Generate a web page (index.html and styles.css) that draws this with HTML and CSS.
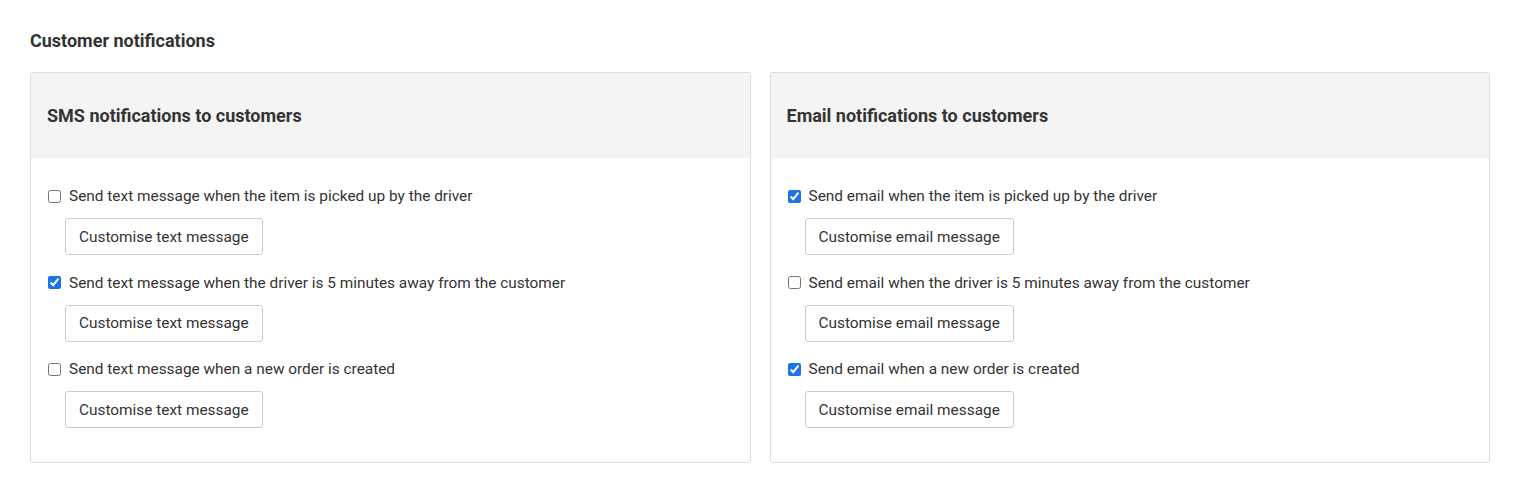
FILE: index.html
```
<!DOCTYPE html>
<html>

<head>
    <title>Customer notifications</title>
    <link rel="stylesheet" href="styles.css">
</head>

<body>
    <div class="settings">
        <h2 class="settings-title">Customer notifications</h2>
        <div class="panels">
            <div class="panel">
                <div class="panel-head">SMS notifications to customers</div>
                <div class="panel-body">
                    <div class="option">
                        <label><input type="checkbox"> Send text message when the item is picked up by the driver</label>
                        <button class="btn">Customise text message</button>
                    </div>
                    <div class="option">
                        <label><input type="checkbox" checked> Send text message when the driver is 5 minutes away from the customer</label>
                        <button class="btn">Customise text message</button>
                    </div>
                    <div class="option">
                        <label><input type="checkbox"> Send text message when a new order is created</label>
                        <button class="btn">Customise text message</button>
                    </div>
                </div>
            </div>
            <div class="panel">
                <div class="panel-head">Email notifications to customers</div>
                <div class="panel-body">
                    <div class="option">
                        <label><input type="checkbox" checked> Send email when the item is picked up by the driver</label>
                        <button class="btn">Customise email message</button>
                    </div>
                    <div class="option">
                        <label><input type="checkbox"> Send email when the driver is 5 minutes away from the customer</label>
                        <button class="btn">Customise email message</button>
                    </div>
                    <div class="option">
                        <label><input type="checkbox" checked> Send email when a new order is created</label>
                        <button class="btn">Customise email message</button>
                    </div>
                </div>
            </div>
        </div>
    </div>
</body>

</html>
```

FILE: styles.css
```
* {
    margin: 0;
    padding: 0;
    box-sizing: border-box;
}

body {
    font-family: Roboto, "Liberation Sans", sans-serif;
    color: #333;
    background: #fff;
}

.settings {
    padding: 30px 35px 0 30px;
}

.settings-title {
    font-size: 18px;
    font-weight: 700;
    line-height: 22px;
    margin-bottom: 20px;
}

.panels {
    display: grid;
    grid-template-columns: 1fr 1fr;
    gap: 19px;
}

.panel {
    border: 1px solid #ddd;
    border-radius: 3px;
    overflow: hidden;
}

.panel-head {
    background: #f4f4f4;
    height: 85px;
    padding: 0 16px;
    display: flex;
    align-items: center;
    font-size: 18px;
    font-weight: 700;
}

.panel-body {
    padding: 28px 16px 16px;
}

.option {
    margin-bottom: 17.5px;
}

.option label {
    display: flex;
    align-items: center;
    font-size: 15.4px;
    line-height: 20px;
}

.option input {
    width: 13px;
    height: 13px;
    margin: 0 8px 0 1px;
    accent-color: #1a73e8;
}

.btn {
    display: block;
    margin: 12px 0 0 18px;
    height: 37px;
    padding: 0 13px;
    font: 15.4px Roboto, "Liberation Sans", sans-serif;
    color: #333;
    background: #fff;
    border: 1px solid #ccc;
    border-radius: 3px;
}
```
